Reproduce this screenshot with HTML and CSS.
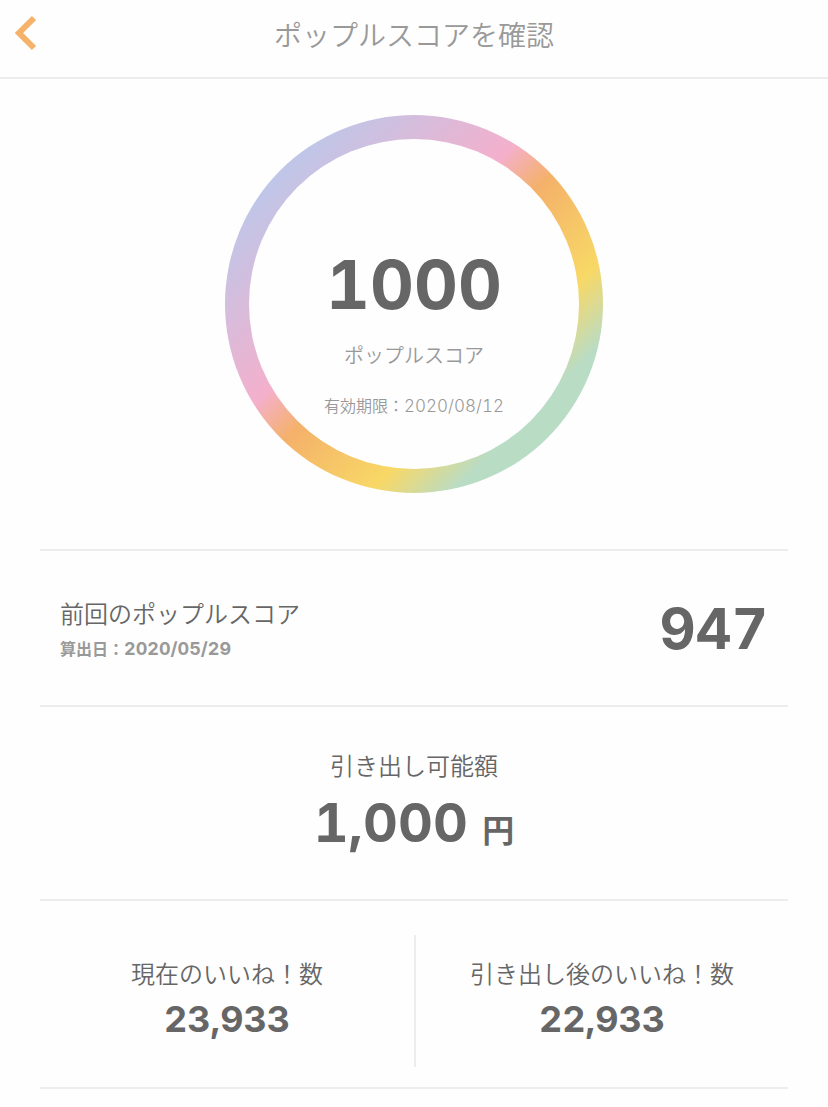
FILE: index.html
```html
<!DOCTYPE html>
<html lang="ja">
<head>
<meta charset="utf-8">
<meta name="viewport" content="width=device-width, initial-scale=1">
<title>ポップルスコアを確認</title>
<link rel="stylesheet" href="styles.css">
</head>
<body>
<header class="header">
  <button class="back" type="button" aria-label="戻る">
    <svg width="24" height="36" viewBox="0 0 24 36" aria-hidden="true"><path d="M20 3 5 18 20 33" fill="none" stroke="#f4b26b" stroke-width="6"/></svg>
  </button>
  <h1 class="title">ポップルスコアを確認</h1>
</header>
<main class="content">
  <section class="score">
    <div class="ring">
      <div class="ring-inner">
        <p class="score-value">1000</p>
        <p class="score-label">ポップルスコア</p>
        <p class="date">有効期限：<time datetime="2020-08-12">2020/08/12</time></p>
      </div>
    </div>
  </section>
  <section class="previous">
    <div>
      <h2 class="label">前回のポップルスコア</h2>
      <p class="date date-bold">算出日：<time datetime="2020-05-29">2020/05/29</time></p>
    </div>
    <p class="value">947</p>
  </section>
  <section class="amount">
    <h2 class="label">引き出し可能額</h2>
    <p class="value">1,000 <span class="unit">円</span></p>
  </section>
  <section class="likes">
    <div class="like">
      <h2 class="label">現在のいいね！数</h2>
      <p class="count">23,933</p>
    </div>
    <div class="like">
      <h2 class="label">引き出し後のいいね！数</h2>
      <p class="count">22,933</p>
    </div>
  </section>
</main>
</body>
</html>
```
FILE: styles.css
```css
* { box-sizing: border-box; }
body {
  margin: 0;
  background: #fefefe;
  color: #666;
  font-family: Inter, "Noto Sans CJK JP", sans-serif;
  font-variant-numeric: tabular-nums;
}
h1, h2, p { margin: 0; font-weight: 350; }

.header {
  display: grid;
  grid-template-columns: 48px 1fr 48px;
  align-items: center;
  padding: 15px 0 20px;
  border-bottom: 2px solid #ededed;
}
.back {
  display: flex;
  align-self: start;
  padding: 0 0 0 14px;
  border: 0;
  background: none;
  cursor: pointer;
}
.title {
  color: #999;
  font-size: 28px;
  line-height: 42px;
  text-align: center;
}

.content { padding: 0 40px; }

.score {
  display: flex;
  justify-content: center;
  padding: 36px 0 56px;
}
.ring {
  width: 378px;
  padding: 24px;
  border-radius: 50%;
  background: linear-gradient(135deg, #bfc6e8 15%, #f4b0cc 42%, #f4b16a 51%, #f8d866 69%, #b9dcc5 80%);
}
.ring-inner {
  display: flex;
  flex-direction: column;
  align-items: center;
  aspect-ratio: 1;
  padding-top: 103px;
  border-radius: 50%;
  background: #fefefe;
  color: #999;
}
.score-value {
  color: #666;
  font-size: 68px;
  font-weight: 700;
  line-height: 84px;
}
.score-label {
  margin: 14px 0 18px;
  font-size: 20px;
  line-height: 32px;
}
.date {
  margin-top: 4px;
  color: #999;
  font-size: 16px;
  line-height: 24px;
}
.date time { font-size: 17px; }
.date-bold { font-weight: 700; }
.date-bold time { font-size: 18px; }

.label {
  font-size: 24px;
  line-height: 36px;
}
.value {
  font-size: 54px;
  font-weight: 700;
  line-height: 72px;
}

.previous {
  display: flex;
  align-items: center;
  justify-content: space-between;
  padding: 46px 20px 44px;
  border-top: 2px solid #ededed;
}
.previous .value {
  font-size: 56px;
  line-height: 64px;
}

.amount {
  padding: 42px 0 40px;
  border-top: 2px solid #ededed;
  text-align: center;
}
.amount .value { margin-top: 2px; }
.unit {
  font-size: 32px;
  line-height: 1;
}

.likes {
  display: grid;
  grid-template-columns: 1fr 1fr;
  padding: 34px 0 20px;
  border-top: 2px solid #ededed;
  border-bottom: 2px solid #ededed;
}
.like {
  padding: 22px 0;
  text-align: center;
}
.like + .like { border-left: 2px solid #ededed; }
.count {
  font-size: 36px;
  font-weight: 700;
  line-height: 52px;
}
```
